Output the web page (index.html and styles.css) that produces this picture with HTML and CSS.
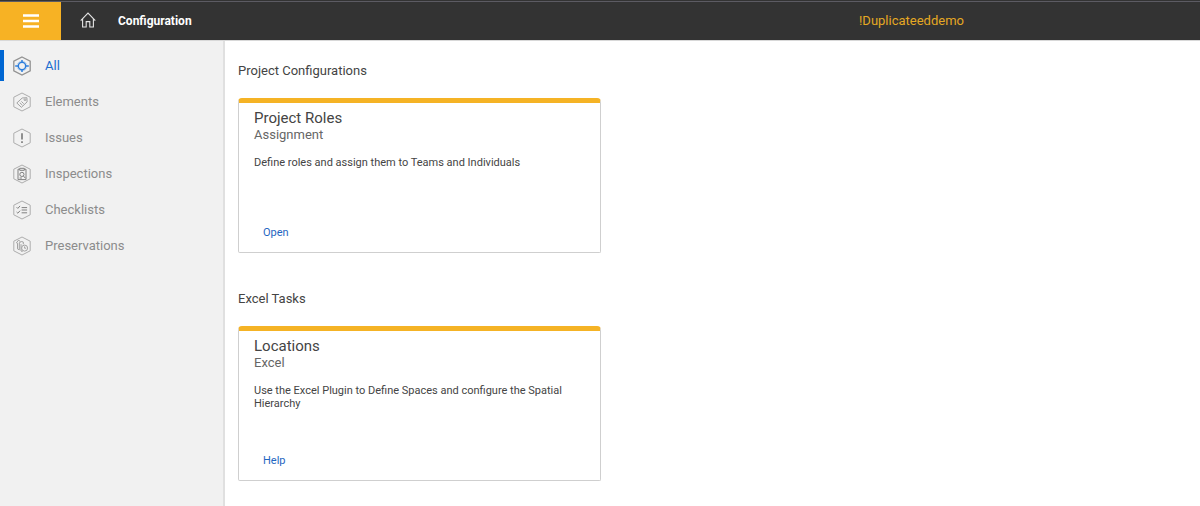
FILE: index.html
```html
<!DOCTYPE html>
<html lang="en">
<head>
<meta charset="utf-8">
<meta name="viewport" content="width=device-width, initial-scale=1">
<title>Configuration</title>
<link rel="stylesheet" href="styles.css">
</head>
<body>
<header class="topbar">
  <button class="menu-button" type="button" aria-label="Menu">
    <svg width="16" height="14" viewBox="0 0 16 14"><path d="M0 1.5h16M0 7h16M0 12.5h16" stroke="#fff" stroke-width="2.4"/></svg>
  </button>
  <a class="home" href="#" aria-label="Home">
    <svg width="16" height="16" viewBox="0 0 16 16" fill="none" stroke="#e4e4e4" stroke-width="1.1"><path d="M.7 8.6 8 1.1l7.3 7.5M2.6 7v8h3.6V9.6h3.6V15h3.6V7"/></svg>
  </a>
  <h1 class="page-title">Configuration</h1>
  <span class="project-name">!Duplicateeddemo</span>
</header>
<div class="layout">
  <nav class="sidebar">
    <a class="nav-item active" href="#">
      <svg class="nav-icon" viewBox="0 0 20 20"><path class="hex" d="M10 1 18.2 5.2v9.6L10 19 1.8 14.8V5.2z"/><circle cx="10" cy="10" r="3.7"/><path d="M10 4v2.3M10 13.7V16M3.2 10h3.1M13.7 10h3.1"/><path class="fine" d="M5.2 8.2 8.2 5.2M11.8 5.2l3 3M14.8 11.8l-3 3M8.2 14.8l-3-3"/></svg>
      <span>All</span>
    </a>
    <a class="nav-item" href="#">
      <svg class="nav-icon" viewBox="0 0 20 20"><path class="hex" d="M10 1 18.2 5.2v9.6L10 19 1.8 14.8V5.2z"/><path d="m4.8 11 5.4-5 4.7-.3.2 4.2-5.7 5.4z"/><circle cx="13" cy="7.7" r=".9"/><path d="m7.8 10.7 2.6 2.5M9.4 9.4l2.3 2.3"/></svg>
      <span>Elements</span>
    </a>
    <a class="nav-item" href="#">
      <svg class="nav-icon" viewBox="0 0 20 20"><path class="hex" d="M10 1 18.2 5.2v9.6L10 19 1.8 14.8V5.2z"/><path class="strong" d="M10 5.2v6.3M10 13.2v1.8"/></svg>
      <span>Issues</span>
    </a>
    <a class="nav-item" href="#">
      <svg class="nav-icon" viewBox="0 0 20 20"><path class="hex" d="M10 1 18.2 5.2v9.6L10 19 1.8 14.8V5.2z"/><g class="dark"><path d="M7.7 5.2H6v10.4h8V5.2h-1.7M7.7 4.3h4.6v2H7.7z"/><circle cx="9.9" cy="10.4" r="2.1"/><path d="m11.4 12 2 2.2M7.6 14h2.3"/></g></svg>
      <span>Inspections</span>
    </a>
    <a class="nav-item" href="#">
      <svg class="nav-icon" viewBox="0 0 20 20"><path class="hex" d="M10 1 18.2 5.2v9.6L10 19 1.8 14.8V5.2z"/><path class="dark" d="m4.6 7.2 1.2 1.2 2.3-2.5M4.6 12l1.2 1.2 2.3-2.5M9.6 7.6h5.5M9.6 10h5.5M9.6 12.8h5.5"/></svg>
      <span>Checklists</span>
    </a>
    <a class="nav-item" href="#">
      <svg class="nav-icon" viewBox="0 0 20 20"><path class="hex" d="M10 1 18.2 5.2v9.6L10 19 1.8 14.8V5.2z"/><path d="M4.4 6.8 6.7 4l2 2.2-1.4.5v7.2l-1.8-1V7.2zM9 8.2V15l1.6.6"/><circle cx="12.6" cy="12.1" r="3"/><path d="M12.6 10.4v1.8h1.5M9.2 5.4l2.1.6v2.3"/></svg>
      <span>Preservations</span>
    </a>
  </nav>
  <main class="content">
    <section class="section">
      <h2 class="section-title">Project Configurations</h2>
      <article class="card">
        <h3 class="card-title">Project Roles</h3>
        <p class="card-subtitle">Assignment</p>
        <p class="card-text">Define roles and assign them to Teams and Individuals</p>
        <a class="card-action" href="#">Open</a>
      </article>
    </section>
    <section class="section">
      <h2 class="section-title">Excel Tasks</h2>
      <article class="card">
        <h3 class="card-title">Locations</h3>
        <p class="card-subtitle">Excel</p>
        <p class="card-text">Use the Excel Plugin to Define Spaces and configure the Spatial Hierarchy</p>
        <a class="card-action" href="#">Help</a>
      </article>
    </section>
  </main>
</div>
</body>
</html>
```
FILE: styles.css
```css
* {
  box-sizing: border-box;
}

body {
  display: flex;
  flex-direction: column;
  min-height: 100vh;
  margin: 0;
  background: #fff;
  color: #444;
  font-family: Roboto, "Liberation Sans", sans-serif;
}

h1, h2, h3, p {
  margin: 0;
  font-weight: 400;
}

a {
  color: inherit;
  text-decoration: none;
}

svg {
  display: block;
}

.topbar {
  display: grid;
  grid-template-columns: 61px 53px 1fr 341px;
  align-items: center;
  height: 40px;
  padding-top: 2px;
  background: linear-gradient(#333 1px, #5c5b63 1px, #5c5b63 2px, #333 2px);
}

.menu-button {
  display: flex;
  align-items: center;
  justify-content: center;
  height: 38px;
  padding: 0;
  border: 0;
  background: #f7b224;
}

.home {
  display: flex;
  justify-content: center;
  padding-bottom: 3px;
}

.page-title {
  padding-left: 4px;
  color: #fff;
  font-size: 12px;
  font-weight: 700;
}

.project-name {
  padding-bottom: 2px;
  color: #e5a823;
  font-size: 13px;
}

.layout {
  display: flex;
  flex: 1;
  border-top: 1px solid #d8d8d8;
}

.sidebar {
  flex: 0 0 225px;
  padding-top: 9px;
  border-right: 2px solid #e0e0e0;
  background: #f1f1f1;
}

.nav-item {
  display: flex;
  align-items: center;
  gap: 13px;
  height: 31px;
  margin-bottom: 5px;
  padding-left: 8px;
  border-left: 4px solid transparent;
  color: #8c8c8c;
  font-size: 13px;
}

.nav-item.active {
  border-left-color: #0066d2;
  color: #1c6dd0;
}

.nav-icon {
  width: 20px;
  height: 20px;
  fill: none;
  stroke: #a2a2a2;
  stroke-width: 1;
}

.hex {
  stroke: #adadad;
}

.active .nav-icon {
  stroke: #2e7fdc;
  stroke-width: 1.5;
}

.active .hex {
  stroke: #929292;
  stroke-width: 1.3;
}

.fine {
  stroke: #9cc0ea;
  stroke-width: 0.8;
}

.strong {
  stroke: #777;
  stroke-width: 1.6;
}

.dark {
  stroke: #808080;
}

.content {
  flex: 1;
  padding: 20px 13px 0;
}

.section {
  margin-bottom: 36px;
}

.section-title {
  margin-bottom: 17px;
  font-size: 13px;
  line-height: 20px;
}

.card {
  display: flex;
  flex-direction: column;
  max-width: 363px;
  min-height: 155px;
  padding: 6px 15px 9px;
  border: 1px solid #cfcfcf;
  border-top: 5px solid #f5b325;
  border-radius: 4px 4px 2px 2px;
}

.card-title {
  font-size: 15px;
  line-height: 18px;
}

.card-subtitle {
  margin-bottom: 13px;
  color: #666;
  font-size: 13px;
  line-height: 16px;
}

.card-text {
  font-size: 11px;
  line-height: 13px;
}

.card-action {
  align-self: flex-start;
  margin-top: auto;
  padding: 0 9px;
  color: #1f66c1;
  font-size: 11px;
  line-height: 20px;
}
```
